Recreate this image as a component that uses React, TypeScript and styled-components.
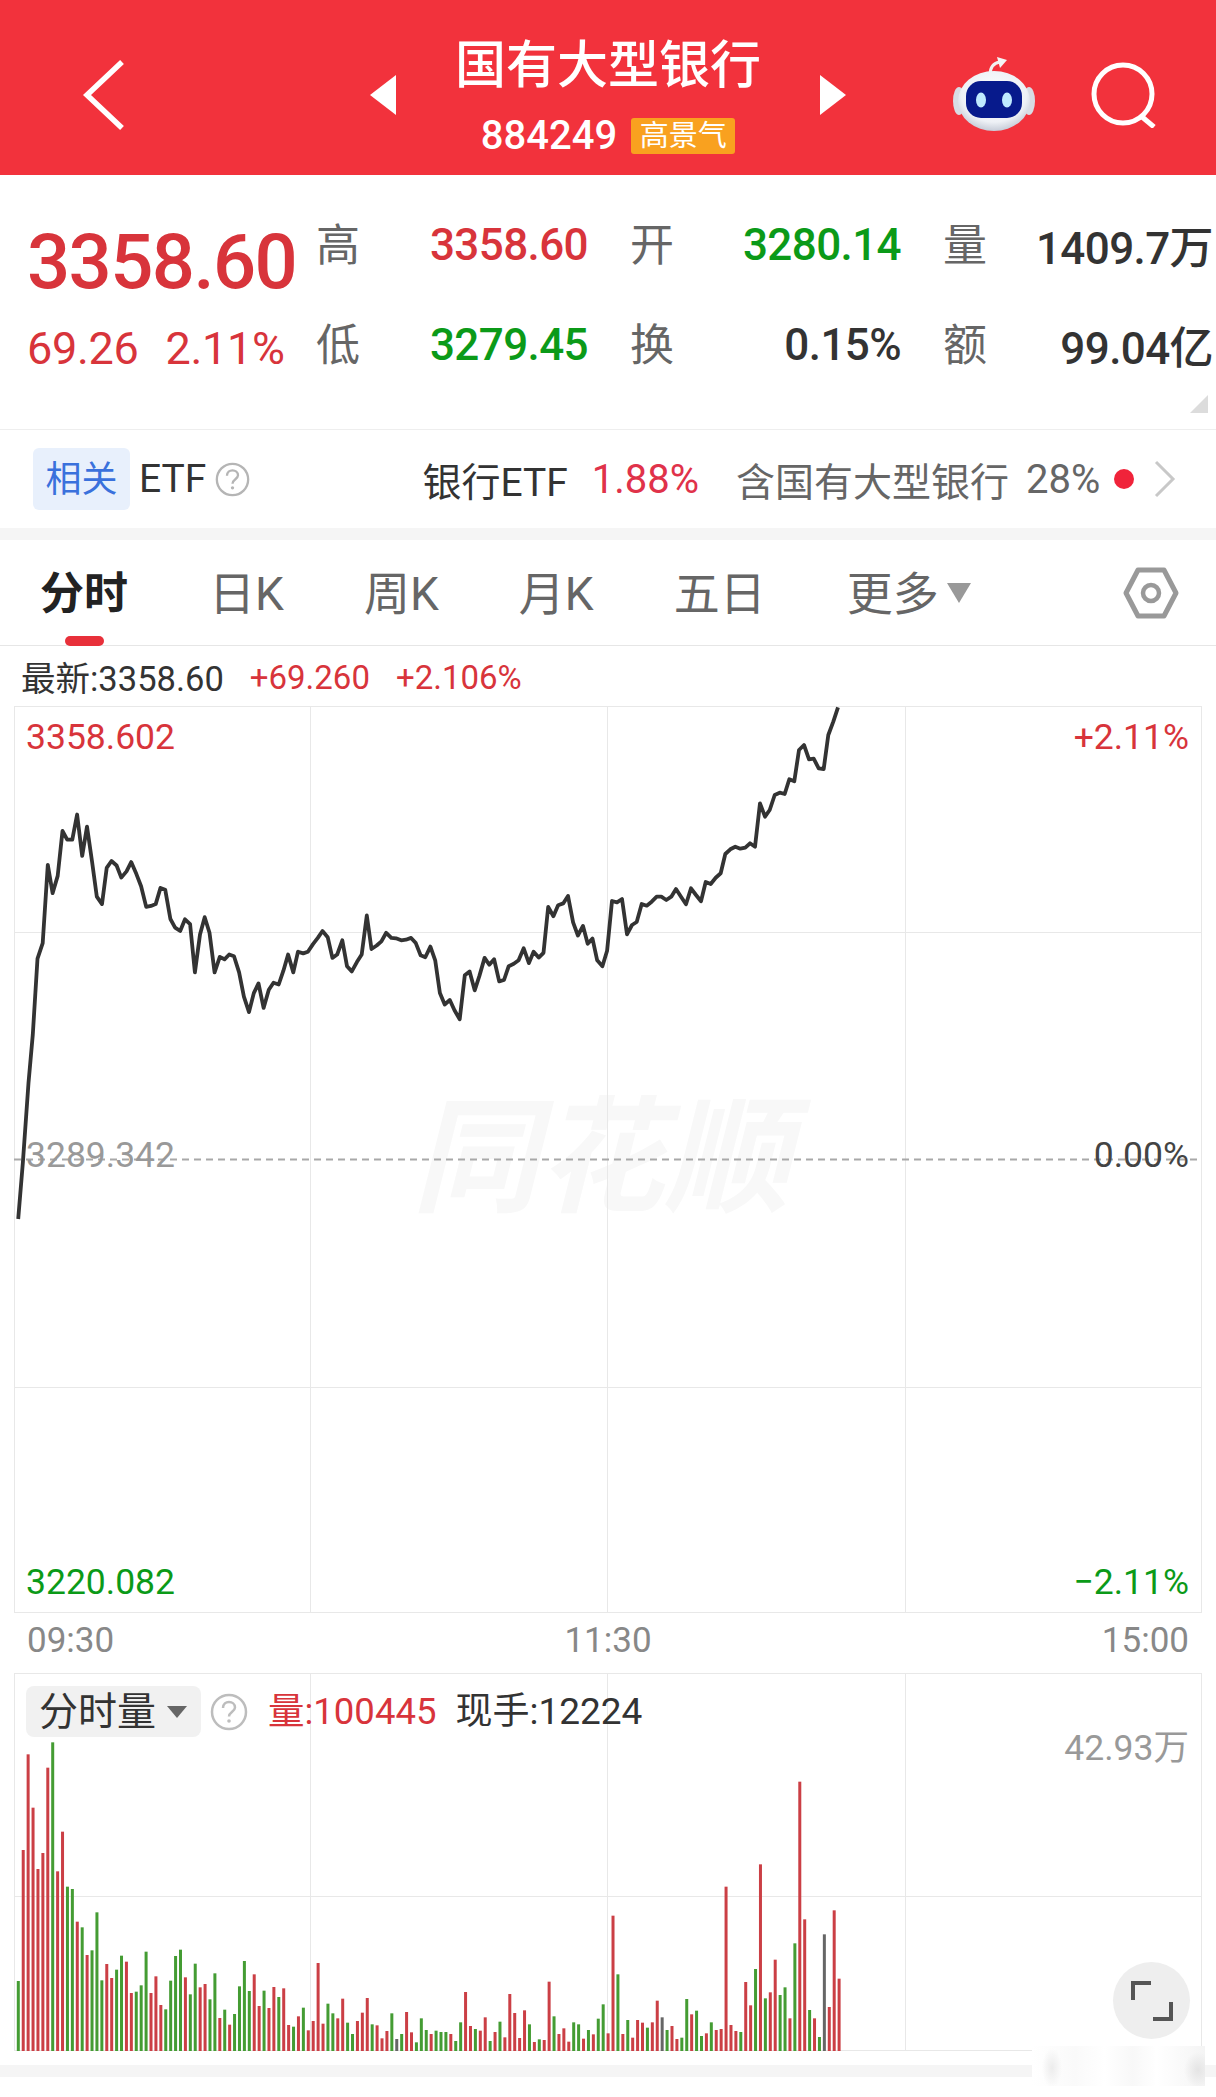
import React from "react";
import styled, { createGlobalStyle } from "styled-components";

const RED = "#d8343b";
const GREEN = "#0b9a18";
const GRID = "#e8e8e8";

const GlobalStyle = createGlobalStyle`
  html, body {
    margin: 0;
    padding: 0;
    background: #fff;
  }
  body {
    font-family: Roboto, "Noto Sans CJK SC", sans-serif;
    color: #333;
  }
`;

const Page = styled.div`
  position: relative;
  width: 1216px;
  height: 2097px;
  overflow: hidden;
  background: #fff;
`;

const Header = styled.header`
  height: 175px;
  background: #f2323c;
  display: grid;
  grid-template-columns: 1fr 476px 1fr;
  align-items: center;
  color: #fff;
`;

const BackSlot = styled.div`
  padding-left: 82px;
  display: flex;
  align-items: center;
  padding-top: 14px;
`;

const TitleNav = styled.div`
  display: flex;
  justify-content: space-between;
  align-items: center;
  padding-top: 14px;
`;

const TitleBlock = styled.div`
  display: flex;
  flex-direction: column;
  align-items: center;
  margin-top: 4px;
`;

const Title = styled.div`
  font-size: 51px;
  line-height: 66px;
  font-weight: 500;
`;

const CodeRow = styled.div`
  display: flex;
  align-items: center;
  gap: 14px;
  height: 50px;
  margin-top: 12px;
`;

const Code = styled.span`
  font-size: 40px;
  font-weight: 500;
`;

const Badge = styled.span`
  width: 104px;
  height: 36px;
  border-radius: 3px;
  background: #f9a11f;
  font-size: 29px;
  line-height: 36px;
  text-align: center;
`;

const RightIcons = styled.div`
  display: flex;
  align-items: center;
  gap: 55px;
  padding-left: 106px;
  padding-top: 14px;
`;

const Quote = styled.section`
  height: 254px;
  border-bottom: 1px solid #eee;
  display: flex;
  position: relative;
`;

const PriceColumn = styled.div`
  width: 316px;
  padding-left: 27px;
  box-sizing: border-box;
`;

const BigPrice = styled.div`
  font-size: 76px;
  line-height: 80px;
  font-weight: 500;
  letter-spacing: -1.6px;
  color: ${RED};
  margin-top: 47px;
`;

const ChangeRow = styled.div`
  display: flex;
  gap: 27px;
  margin-top: 17px;
  font-size: 45px;
  line-height: 60px;
  letter-spacing: -0.3px;
  color: ${RED};
`;

const StatGrid = styled.div`
  display: grid;
  grid-template-columns: 314px 313px 270px;
  grid-auto-rows: 100px;
  padding-top: 20px;
`;

const StatCell = styled.div`
  display: flex;
  justify-content: space-between;
  align-items: center;
  padding-right: 42px;
  &:nth-child(3n) {
    padding-right: 0;
  }
`;

const StatLabel = styled.span`
  font-size: 44px;
  color: #666;
  margin-top: -6px;
`;

const StatValue = styled.span<{ $tone?: string }>`
  font-size: 44px;
  font-weight: 500;
  letter-spacing: -0.6px;
  color: ${({ $tone }) => $tone || "#333"};
  white-space: nowrap;
`;

const CornerMark = styled.div`
  position: absolute;
  right: 8px;
  bottom: 16px;
  width: 0;
  height: 0;
  border-left: 18px solid transparent;
  border-bottom: 18px solid #dcdcdc;
`;

const EtfRow = styled.section`
  height: 98px;
  display: flex;
  align-items: center;
  padding-left: 33px;
  font-size: 39px;
  color: #333;
`;

const RelatedChip = styled.span`
  width: 97px;
  height: 62px;
  border-radius: 6px;
  background: #e8f0fc;
  color: #3a71dc;
  font-size: 36px;
  line-height: 64px;
  text-align: center;
`;

const EtfWord = styled.span`
  margin-left: 9px;
  margin-right: 9px;
`;

const EtfName = styled.span`
  margin-left: 172px;
`;

const EtfPct = styled.span`
  margin-left: 24px;
  font-size: 40px;
  color: #e0324a;
`;

const HoldNote = styled.span`
  margin-left: 37px;
  color: #666;
`;

const HoldPct = styled.span`
  margin-left: 17px;
  font-size: 40px;
  color: #666;
`;

const RedDot = styled.span`
  width: 20px;
  height: 20px;
  border-radius: 50%;
  background: #f0233a;
  margin-left: 14px;
`;

const Band = styled.div`
  height: 12px;
  background: #f5f5f5;
`;

const Tabs = styled.nav`
  height: 105px;
  border-bottom: 1px solid #e6e6e6;
  display: flex;
  align-items: center;
  gap: 80px;
  padding: 0 0 0 40px;
  position: relative;
  box-sizing: content-box;
`;

const Tab = styled.span<{ $active?: boolean }>`
  position: relative;
  font-size: ${({ $active }) => ($active ? "44px" : "46px")};
  line-height: 60px;
  margin-top: 2px;
  font-weight: ${({ $active }) => ($active ? 700 : 400)};
  color: ${({ $active }) => ($active ? "#222" : "#666")};
  margin-right: ${({ $active }) => ($active ? "1px" : "0")};
  &:nth-child(6) {
    margin-left: 1px;
    display: flex;
    align-items: center;
    gap: 8px;
  }
  ${({ $active }) =>
    $active &&
    `&::after {
      content: "";
      position: absolute;
      left: 25px;
      bottom: -22px;
      width: 39px;
      height: 10px;
      border-radius: 5px;
      background: #e8303a;
    }`}
`;

const MoreCaret = styled.i`
  width: 0;
  height: 0;
  border-left: 12px solid transparent;
  border-right: 12px solid transparent;
  border-top: 20px solid #999;
  margin-top: -2px;
`;

const SettingsSlot = styled.span`
  position: absolute;
  left: 1123px;
  top: 26px;
  display: flex;
`;

const InfoLine = styled.div`
  height: 60px;
  display: flex;
  align-items: center;
  gap: 26px;
  padding-left: 21px;
  font-size: 34.500px;
  color: #333;
`;

const InfoRed = styled.span`
  font-size: 33px;
  margin-top: 2px;
  color: ${RED};
`;

const ChartPanel = styled.section<{ $h: number }>`
  position: relative;
  margin-left: 14px;
  width: 1188px;
  height: ${({ $h }) => $h}px;
`;

const Watermark = styled.div`
  position: absolute;
  left: 398px;
  top: 368px;
  font-size: 126px;
  line-height: 170px;
  font-weight: 700;
  font-style: italic;
  color: #f8f8f8;
  white-space: nowrap;
`;

const Drawing = styled.svg`
  position: absolute;
  left: 0;
  top: 0;
  display: block;
`;

const AxisLabel = styled.span<{ $tone: string; $y: number; $right?: boolean }>`
  position: absolute;
  top: ${({ $y }) => $y}px;
  ${({ $right }) => ($right ? "right: 13px;" : "left: 12px;")}
  font-size: 35.500px;
  line-height: 40px;
  color: ${({ $tone }) => $tone};
`;

const TimeAxis = styled.div`
  height: 60px;
  box-sizing: border-box;
  padding: 0 27px 6px 27px;
  display: flex;
  justify-content: space-between;
  align-items: center;
  font-size: 35px;
  color: #888;
`;

const VolumeBar = styled.div`
  position: absolute;
  left: 12px;
  top: 13px;
  display: flex;
  align-items: center;
`;

const VolumeChip = styled.span`
  width: 175px;
  height: 51px;
  box-sizing: border-box;
  padding-left: 13px;
  border-radius: 8px;
  background: #f1f1f1;
  display: flex;
  align-items: center;
  gap: 11px;
  font-size: 39px;
  line-height: 48px;
  color: #333;
`;

const ChipCaret = styled.i`
  width: 0;
  height: 0;
  border-left: 10px solid transparent;
  border-right: 10px solid transparent;
  border-top: 12px solid #666;
`;

const HelpSlot = styled.span`
  display: flex;
  margin-left: 9px;
`;

const VolumeRed = styled.span`
  margin-left: 20px;
  font-size: 36.500px;
  line-height: 44px;
  color: ${RED};
`;

const VolumeNow = styled.span`
  margin-left: 19px;
  font-size: 37px;
  line-height: 44px;
  color: #333;
`;

const FullscreenButton = styled.span`
  position: absolute;
  left: 1099px;
  top: 289px;
  width: 77px;
  height: 77px;
  border-radius: 50%;
  background: #eeeeee;
  display: flex;
  align-items: center;
  justify-content: center;
`;

const BottomGap = styled.div`
  height: 14px;
`;

const BlurMark = styled.div`
  position: absolute;
  left: 1032px;
  top: 2046px;
  width: 173px;
  height: 40px;
  background:
    radial-gradient(ellipse 14px 18px at 166px 24px, #e4e4e4, transparent),
    radial-gradient(ellipse 10px 20px at 20px 22px, #ececec, transparent),
    linear-gradient(90deg, #fff 0%, #fafafa 25%, #fff 42%, #f8f8f8 58%, #fff 72%, #f9f9f9 88%, #f4f4f4 100%);
`;

// traced from the day's 1-minute line, first part then second part
const lineA: [number, number][] = [
  [46,1505],[58,1340],[72,1110],[83,970],[95,750],[108,705],[121,478],[133,560],[146,510],[158,380],[170,405],[183,405],[195,332],[208,452],[220,367],[233,470],[245,570],[258,592],[270,487],[282,467],[295,480],[307,515],[320,497],[332,470],[345,505],[357,540],[370,600],[382,597],[394,592],[406,545],[418,550],[431,635],[443,660],[456,670],[468,636],[481,650],[493,790],[506,680],[518,630],[530,675],[543,790],[556,745],[568,752],[580,738],[592,743],[605,790],[617,860],[630,905],[642,850],[654,822],[667,893],[680,840],[692,820],[705,825],[717,785],[729,738],[742,790],[754,730],[767,735],[779,730],[792,708],[804,690],[816,670],[829,688],[841,748],[853,738],[866,697],[878,772],[890,787],[903,760],[915,738],[928,625],[940,722],[953,712],[965,700],[977,675],[990,690],[1002,691],[1015,697],[1027,695],[1040,690],[1052,705],[1064,740],[1076,746],[1089,715],[1101,755],[1113,850],[1125,883],[1138,870],[1150,900],[1163,926],[1176,798],[1188,787],[1201,842],[1213,800],[1226,748],[1238,768],[1250,752],[1263,816],[1275,812],[1287,772],[1300,765],[1312,755],[1325,720],[1338,763],[1350,730],[1363,747],[1375,733],[1387,600],[1400,627],[1412,595],[1425,590],[1437,568],[1450,645],[1462,683],[1475,655],[1487,707],[1499,692],[1511,755],[1524,772],[1536,727],
];
const lineB: [number, number][] = [
  [636,603],[651,607],[666,597],[681,703],[696,675],[710,666],[725,612],[740,617],[755,605],[770,590],[784,590],[799,600],[814,590],[828,567],[843,590],[858,613],[873,565],[888,585],[903,604],[917,546],[932,552],[947,533],[962,520],[976,462],[991,448],[1006,440],[1021,446],[1036,443],[1050,430],[1065,440],[1080,310],[1095,350],[1109,330],[1124,285],[1139,278],[1154,282],[1168,238],[1183,244],[1197,150],[1212,135],[1227,178],[1241,176],[1256,205],[1271,207],[1285,105],[1300,65],[1314,22],
];

const linePoints = [
  ...lineA.map(([x, y]) => `${(x / 2.53 - 14).toFixed(1)},${(y / 2.9 - 6).toFixed(1)}`),
  ...lineB.map(([x, y]) => `${(x / 3 + 386).toFixed(1)},${(y / 3 - 6).toFixed(1)}`),
].join(" ");

// bar tops per minute, r/g/n = up/down/flat
const barData =
  "963g 570r 283r 443r 627r 579r 323r 247g 634r 515r 680g 687g 785r 802g 885r 871g 757g 961g 912r 954r 929g 887g 905r 999r 995g 976g 875g 999r 949r 1035r 1048g 962g 888g 869g 952r 1003g 911g 982r 972r 1018g 940g 1074r 1049g 1094r 1062g 979g 903g 993g 943r 1038r 992g 1044r 981r 1011g 985r 1095r 1100g 1069r 1043g 1111r 1083r 909r 1091r 1031g 1060g 1075r 1016r 1088g 1122g 1083r 1058r 1014r 1093g 1096r 1135r 1113r 1060g 1137n 1122g 1056r 1117r 1147g 1075g 1110g 1122r " +
  "1112g 1116g 1116g 1122r 1143g 1087g 996r 1098r 1107g 1112r 1072r 1143g 1116r 1085g 1132r 1002r 1059r 1134r 1051r 1093g 1146r 1138g 1140r 965r 1069g 1122r 1105r 1145r 1087g 1093g 1136r 1110g 1123r 1076g 1033g 1120r 767r 943g 1122r 1080g 1133r 1080r 1088r 1103g 1087r 1022r 1072n 1110g 1098r 1137r 1133g 1017g 1063r 1052g 1128g 1120r 1087g 1110r 1107r 680r 1095r 1113r 1116g 966r 1036r 927g 613r 1015g 997r 899r 1005g 982g 1075r 850g 365r 778r 1050g 1075r 1131g 823n 1041r 751r 956r";

const barColors: Record<string, string> = { r: "#cb3f45", g: "#449c33", n: "#666666" };

const bars = barData.split(" ").map((item, i) => ({
  x: 18.3 + i * 4.915 - 14,
  top: parseInt(item, 10) / 3 + 1660 - 1673,
  color: barColors[item[item.length - 1]],
}));

const HelpIcon = ({ size, color }: { size: number; color: string }) => (
  <svg width={size} height={size} viewBox="0 0 38 38">
    <circle cx="19" cy="19" r="17" fill="none" stroke={color} strokeWidth="2.5" />
    <path d="M13 15c0-4 3-6 6-6s6 2 6 5.500c0 4-6 4.500-6 9" fill="none" stroke={color} strokeWidth="2.500" />
    <circle cx="19" cy="28" r="1.800" fill={color} />
  </svg>
);

const RobotIcon = () => (
  <svg width="84" height="76" viewBox="0 0 84 76">
    <defs>
      <radialGradient id="robotShell" cx="50%" cy="40%" r="60%">
        <stop offset="0%" stopColor="#ffffff" />
        <stop offset="75%" stopColor="#eef1f6" />
        <stop offset="100%" stopColor="#c6ccd8" />
      </radialGradient>
    </defs>
    <path d="M38 18c0-8 3-12 10-13" fill="none" stroke="#f1f1f1" strokeWidth="3" />
    <path d="M45 0l10 3-7 8z" fill="#f4f4f4" />
    <ellipse cx="7" cy="44" rx="6" ry="14" fill="#d8dce4" />
    <ellipse cx="77" cy="44" rx="6" ry="14" fill="#d8dce4" />
    <ellipse cx="42" cy="44" rx="36" ry="30" fill="url(#robotShell)" />
    <rect x="14" y="24" width="56" height="37" rx="15" fill="#071a8c" />
    <ellipse cx="29" cy="43" rx="5" ry="7.500" fill="#bfeaff" />
    <ellipse cx="55" cy="43" rx="5" ry="7.500" fill="#bfeaff" />
  </svg>
);

export default function App() {
  return (
    <Page>
      <GlobalStyle />
      <Header>
        <BackSlot>
          <svg width="44" height="72" viewBox="0 0 44 72">
            <path d="M40 3L5 36l35 33" fill="none" stroke="#fff" strokeWidth="5.500" />
          </svg>
        </BackSlot>
        <TitleNav>
          <svg width="26" height="40" viewBox="0 0 26 40">
            <path d="M26 0v40L0 20z" fill="#fff" />
          </svg>
          <TitleBlock>
            <Title>国有大型银行</Title>
            <CodeRow>
              <Code>884249</Code>
              <Badge>高景气</Badge>
            </CodeRow>
          </TitleBlock>
          <svg width="26" height="40" viewBox="0 0 26 40">
            <path d="M0 0v40l26-20z" fill="#fff" />
          </svg>
        </TitleNav>
        <RightIcons>
          <RobotIcon />
          <svg width="68" height="66" viewBox="0 0 68 66">
            <circle cx="32" cy="32" r="29" fill="none" stroke="#fff" strokeWidth="5" />
            <path d="M50 54l13 11" fill="none" stroke="#fff" strokeWidth="5" />
          </svg>
        </RightIcons>
      </Header>

      <Quote>
        <PriceColumn>
          <BigPrice>3358.60</BigPrice>
          <ChangeRow>
            <span>69.26</span>
            <span>2.11%</span>
          </ChangeRow>
        </PriceColumn>
        <StatGrid>
          <StatCell>
            <StatLabel>高</StatLabel>
            <StatValue $tone={RED}>3358.60</StatValue>
          </StatCell>
          <StatCell>
            <StatLabel>开</StatLabel>
            <StatValue $tone={GREEN}>3280.14</StatValue>
          </StatCell>
          <StatCell>
            <StatLabel>量</StatLabel>
            <StatValue>1409.7万</StatValue>
          </StatCell>
          <StatCell>
            <StatLabel>低</StatLabel>
            <StatValue $tone={GREEN}>3279.45</StatValue>
          </StatCell>
          <StatCell>
            <StatLabel>换</StatLabel>
            <StatValue>0.15%</StatValue>
          </StatCell>
          <StatCell>
            <StatLabel>额</StatLabel>
            <StatValue>99.04亿</StatValue>
          </StatCell>
        </StatGrid>
        <CornerMark />
      </Quote>

      <EtfRow>
        <RelatedChip>相关</RelatedChip>
        <EtfWord>ETF</EtfWord>
        <HelpIcon size={35} color="#b5b5b5" />
        <EtfName>银行ETF</EtfName>
        <EtfPct>1.88%</EtfPct>
        <HoldNote>含国有大型银行</HoldNote>
        <HoldPct>28%</HoldPct>
        <RedDot />
        <svg width="24" height="38" viewBox="0 0 24 38" style={{ marginLeft: 19 }}>
          <path d="M3 2l17 17L3 36" fill="none" stroke="#c8c8c8" strokeWidth="3" />
        </svg>
      </EtfRow>
      <Band />

      <Tabs>
        <Tab $active>分时</Tab>
        <Tab>日K</Tab>
        <Tab>周K</Tab>
        <Tab>月K</Tab>
        <Tab>五日</Tab>
        <Tab>
          更多
          <MoreCaret />
        </Tab>
        <SettingsSlot>
          <svg width="56" height="54" viewBox="0 0 56 54">
            <path d="M3 27L15 4h26l12 23-12 23H15z" fill="none" stroke="#999" strokeWidth="5" strokeLinejoin="round" />
            <circle cx="28" cy="27" r="8" fill="none" stroke="#999" strokeWidth="4.500" />
          </svg>
        </SettingsSlot>
      </Tabs>

      <InfoLine>
        <span>最新:3358.60</span>
        <InfoRed>+69.260</InfoRed>
        <InfoRed>+2.106%</InfoRed>
      </InfoLine>

      <ChartPanel $h={907}>
        <Watermark>同花顺</Watermark>
        <Drawing width="1188" height="907" viewBox="0 0 1188 907">
          <rect x="0.500" y="0.500" width="1187" height="906" fill="none" stroke={GRID} />
          <path d="M296.500 0v907M593.500 0v907M891.500 0v907M0 226.500h1188M0 681.500h1188" stroke={GRID} fill="none" />
          <path d="M0 453.500h1188" stroke="#a8a8a8" strokeWidth="2" strokeDasharray="7 5" fill="none" />
          <polyline points={linePoints} fill="none" stroke="#333" strokeWidth="3.800" strokeLinejoin="round" />
        </Drawing>
        <AxisLabel $tone={RED} $y={11}>3358.602</AxisLabel>
        <AxisLabel $tone={RED} $y={11} $right>+2.11%</AxisLabel>
        <AxisLabel $tone="#999" $y={429}>3289.342</AxisLabel>
        <AxisLabel $tone="#444" $y={429} $right>0.00%</AxisLabel>
        <AxisLabel $tone={GREEN} $y={856}>3220.082</AxisLabel>
        <AxisLabel $tone={GREEN} $y={856} $right>−2.11%</AxisLabel>
      </ChartPanel>

      <TimeAxis>
        <span>09:30</span>
        <span>11:30</span>
        <span>15:00</span>
      </TimeAxis>

      <ChartPanel $h={378}>
        <Drawing width="1188" height="378" viewBox="0 0 1188 378">
          <rect x="0.500" y="0.500" width="1187" height="377" fill="none" stroke={GRID} />
          <path d="M296.500 0v378M593.500 0v378M891.500 0v378M0 223.500h1188" stroke={GRID} fill="none" />
          {bars.map((bar) => (
            <rect key={bar.x} x={bar.x - 1.5} y={bar.top} width="3" height={378 - bar.top} fill={bar.color} />
          ))}
        </Drawing>
        <VolumeBar>
          <VolumeChip>
            分时量
            <ChipCaret />
          </VolumeChip>
          <HelpSlot>
            <HelpIcon size={38} color="#bdbdbd" />
          </HelpSlot>
          <VolumeRed>量:100445</VolumeRed>
          <VolumeNow>现手:12224</VolumeNow>
        </VolumeBar>
        <AxisLabel $tone="#999" $y={55} $right>42.93万</AxisLabel>
        <FullscreenButton>
          <svg width="42" height="42" viewBox="0 0 42 42">
            <path d="M2 20V3h18M40 22v17H22" fill="none" stroke="#555" strokeWidth="4" />
          </svg>
        </FullscreenButton>
      </ChartPanel>
      <BottomGap />
      <Band />
      <BlurMark />
    </Page>
  );
}
